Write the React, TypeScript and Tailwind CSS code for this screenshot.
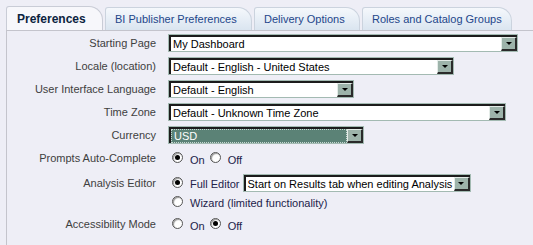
import React from 'react';

const font = { fontFamily: '"Liberation Sans", Arial, sans-serif' };

interface SelectProps {
  value: string;
  width: string;
  selected?: boolean;
}

const FakeSelect: React.FC<SelectProps> = ({ value, width, selected }) => (
  <div className={`${width} h-[18px] border border-[#a3bab2] flex shrink-0`}>
    <div className="flex-1 flex border-t-2 border-l-2 border-[#1c1c1c] bg-white min-w-0">
      <div
        className={`flex-1 flex items-center pl-[2px] text-[11px] leading-none whitespace-nowrap overflow-hidden ${
          selected ? 'bg-[#5b8276] text-white border border-dotted border-[#c8d8d2]' : 'text-black'
        }`}
      >
        {value}
      </div>
      <div className="w-[16px] bg-[#9db3aa] border-r-2 border-b-2 border-[#2a2a2a] border-l border-t border-l-[#e4ece8] border-t-[#e4ece8] flex items-center justify-center">
        <div className="w-0 h-0 border-l-[3px] border-r-[3px] border-t-[3px] border-l-transparent border-r-transparent border-t-black" />
      </div>
    </div>
  </div>
);

const Radio: React.FC<{ checked?: boolean }> = ({ checked }) => (
  <div className="w-[11px] h-[11px] rounded-full border border-[#555] bg-white shadow-[inset_1px_1px_1px_#999] flex items-center justify-center shrink-0 -mt-[2px]">
    {checked && <div className="w-[5px] h-[5px] rounded-full bg-black" />}
  </div>
);

const Label: React.FC<{ children: React.ReactNode }> = ({ children }) => (
  <div className="w-[149px] shrink-0 text-right text-[11px] text-[#404040] mr-[12px] leading-none">{children}</div>
);

const Opt: React.FC<{ children: React.ReactNode; last?: boolean }> = ({ children, last }) => (
  <span className={`text-[11px] text-[#22224a] leading-none mt-[4px] ml-[7px] ${last ? '' : 'mr-[5px]'}`}>{children}</span>
);

const tabs = [
  { t: 'BI Publisher Preferences', w: 'w-[147px]' },
  { t: 'Delivery Options', w: 'w-[106px]' },
  { t: 'Roles and Catalog Groups', w: 'w-[150px]' },
];

export default function App() {
  return (
    <div className="w-[533px] h-[245px] bg-[#eeeef6] overflow-hidden" style={font}>
      <div className="flex items-end h-[30px] pl-[6px] pt-[6px]">
        <div className="h-[24px] w-[97px] shrink-0 bg-[#f7f7fb] border border-b-0 border-[#c9ccd6] rounded-tl-[3px] rounded-tr-[14px] flex items-center pl-[10px] pt-[1px] text-[12px] font-bold text-[#0b2340]">
          Preferences
        </div>
        {tabs.map((t) => (
          <div
            key={t.t}
            className={`${t.w} shrink-0 h-[23px] ml-[2px] bg-gradient-to-b from-[#f5f8fc] to-[#dae5f0] border border-b-0 border-[#cbd3de] rounded-tl-[3px] rounded-tr-[14px] flex items-center pl-[9px] pt-[1px] text-[11px] text-[#23468a] whitespace-nowrap`}
          >
            {t.t}
          </div>
        ))}
      </div>
      <div className="ml-[6px] border-l border-t border-[#c4c4cc] h-[215px] pt-[3px]">
        <div className="flex items-center h-[18px]">
          <Label>Starting Page</Label>
          <FakeSelect value="My Dashboard" width="w-[350px]" />
        </div>
        <div className="flex items-center h-[18px] mt-[5px]">
          <Label>Locale (location)</Label>
          <FakeSelect value="Default - English - United States" width="w-[286px]" />
        </div>
        <div className="flex items-center h-[18px] mt-[5px]">
          <Label>User Interface Language</Label>
          <FakeSelect value="Default - English" width="w-[186px]" />
        </div>
        <div className="flex items-center h-[18px] mt-[5px]">
          <Label>Time Zone</Label>
          <FakeSelect value="Default - Unknown Time Zone" width="w-[338px]" />
        </div>
        <div className="flex items-center h-[18px] mt-[5px]">
          <Label>Currency</Label>
          <FakeSelect value="USD" width="w-[196px]" selected />
        </div>
        <div className="flex items-center h-[18px] mt-[5px]">
          <Label>Prompts Auto-Complete</Label>
          <div className="flex items-center pl-[4px]">
            <Radio checked />
            <Opt>On</Opt>
            <Radio />
            <Opt last>Off</Opt>
          </div>
        </div>
        <div className="flex items-center h-[18px] mt-[7px]">
          <Label>Analysis Editor</Label>
          <div className="flex items-center pl-[4px]">
            <Radio checked />
            <span className="text-[11px] text-[#22224a] leading-none ml-[7px] mr-[3px] mt-[2px]">Full Editor</span>
            <FakeSelect value="Start on Results tab when editing Analysis" width="w-[228px]" />
          </div>
        </div>
        <div className="flex items-center h-[18px] mt-[1px]">
          <div className="w-[161px] shrink-0" />
          <div className="flex items-center pl-[4px]">
            <Radio />
            <span className="text-[11px] text-[#22224a] leading-none ml-[7px] mt-[2px]">Wizard (limited functionality)</span>
          </div>
        </div>
        <div className="flex items-center h-[18px] mt-[4px]">
          <Label>Accessibility Mode</Label>
          <div className="flex items-center pl-[4px]">
            <Radio />
            <Opt>On</Opt>
            <Radio checked />
            <Opt last>Off</Opt>
          </div>
        </div>
      </div>
    </div>
  );
}
